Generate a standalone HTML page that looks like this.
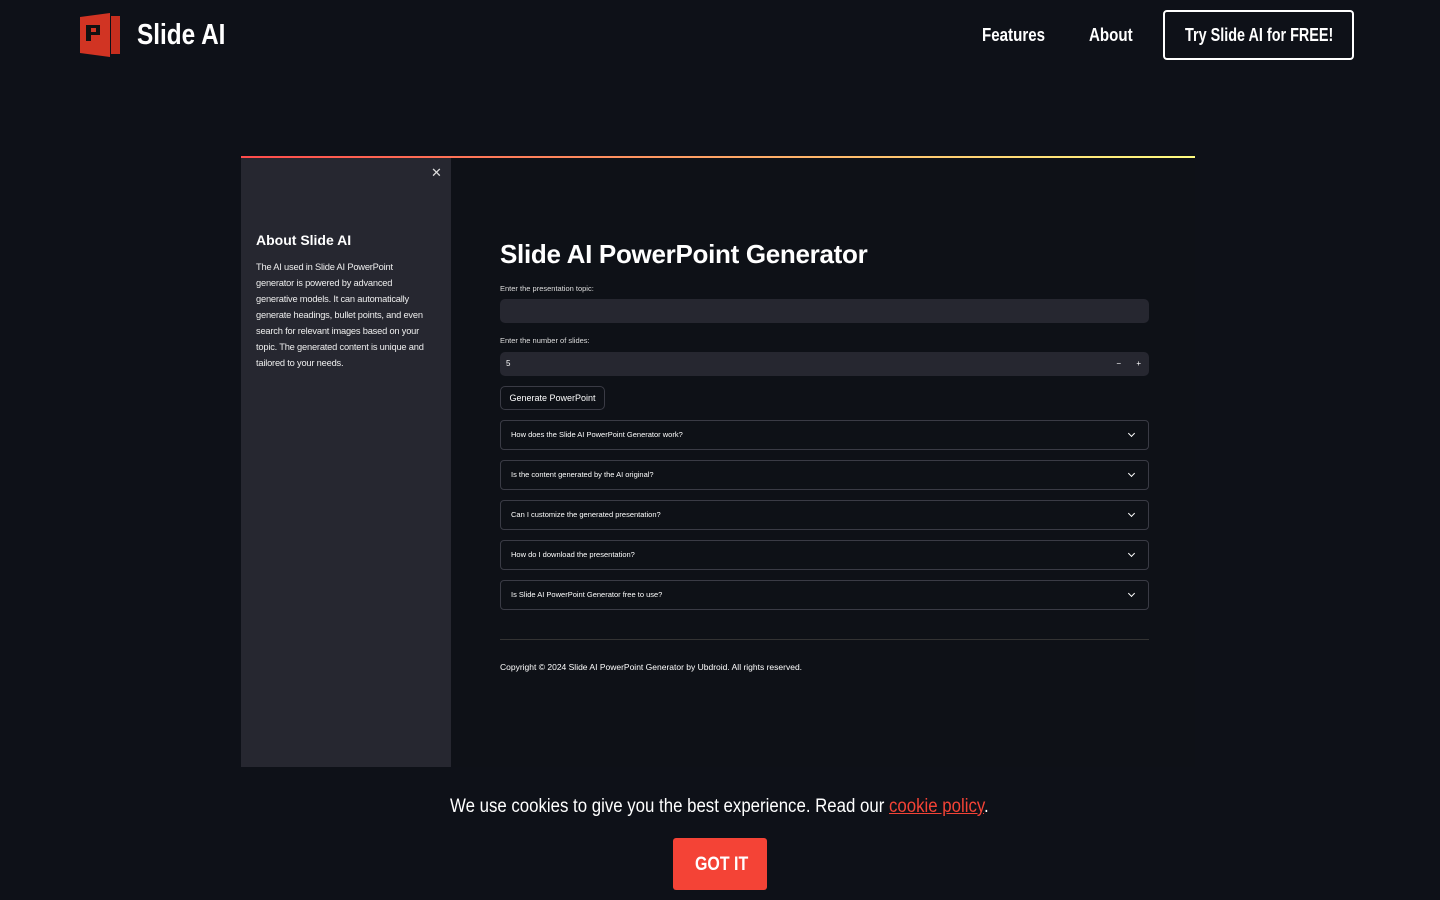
<!DOCTYPE html>
<html><head><meta charset="utf-8"><style>
*{margin:0;padding:0;box-sizing:border-box}
body{width:1440px;height:900px;background:#0e1118;color:#fff;font-family:"Liberation Sans",sans-serif;position:relative;overflow:hidden}
.nar{font-family:"Liberation Sans",sans-serif;font-weight:bold;white-space:nowrap;display:inline-block;transform:scaleX(0.84);transform-origin:left center}
.logo{position:absolute;left:80px;top:13px}
.brand{position:absolute;left:137px;top:19px;font-size:29px}
.nav{position:absolute;top:25px;font-size:18px}
.try{position:absolute;left:1163px;top:10px;width:191px;height:50px;border:2px solid #fff;border-radius:4px}
.try span{position:absolute;left:20px;top:13px;font-size:18px;transform:scaleX(0.8)}
.card{position:absolute;left:241px;top:156px;width:954px;height:611px;background:#0e1117;overflow:hidden}
.grad{position:absolute;left:0;top:0;width:100%;height:2px;background:linear-gradient(90deg,#ff4b4b,#fffd80)}
.side{position:absolute;left:0;top:2px;width:210px;height:609px;background:#262730}
.x{position:absolute;left:190px;top:7px;font-size:13px;color:#ddd}
.side h3{position:absolute;left:15px;top:74px;font-size:14px}
.side p{position:absolute;left:15px;top:101px;width:172px;font-size:9.3px;line-height:16px;color:#eee;letter-spacing:-0.2px}
.m{position:absolute;left:259px;width:649px}
h1{font-size:26px;font-weight:bold;letter-spacing:-0.3px}
.lbl{font-size:7.5px;color:#ddd}
.inp{height:24px;background:#262730;border-radius:5px}
.btn{position:absolute;left:259px;top:230px;width:105px;height:24px;border:1px solid #3a3b45;border-radius:5px;font-size:9px;line-height:22px;text-align:center}
.exp{height:30px;border:1px solid #3a3b45;border-radius:4px;font-size:7.5px;line-height:28px;padding-left:10px;position:absolute;left:259px;width:649px}
.exp:after{content:"";position:absolute;right:14px;top:10px;width:4px;height:4px;border-right:1.3px solid #fff;border-bottom:1.3px solid #fff;transform:rotate(45deg)}
</style></head><body>
<svg class="logo" width="41" height="44" viewBox="0 0 41 44"><path d="M0 4 L30 0 L30 44 L0 40Z" fill="#d13423"/><rect x="31" y="3" width="9" height="38" fill="#c62e1e"/><path d="M6 12h14v10h-9v6h-5zM11 15v4h5v-4z" fill="#111" fill-rule="evenodd"/></svg>
<div class="brand nar">Slide AI</div>
<div class="nav nar" style="left:982px">Features</div>
<div class="nav nar" style="left:1089px">About</div>
<div class="try"><span class="nar">Try Slide AI for FREE!</span></div>
<div class="card"><div class="grad"></div>
<div class="side"><div class="x">✕</div><h3>About Slide AI</h3><p>The AI used in Slide AI PowerPoint generator is powered by advanced generative models. It can automatically generate headings, bullet points, and even search for relevant images based on your topic. The generated content is unique and tailored to your needs.</p></div>
<h1 class="m" style="top:83px">Slide AI PowerPoint Generator</h1>
<div class="m lbl" style="top:128px">Enter the presentation topic:</div>
<div class="m inp" style="top:143px"></div>
<div class="m lbl" style="top:180px">Enter the number of slides:</div>
<div class="m inp" style="top:196px;font-size:8px;line-height:24px;padding-left:6px">5<span style="position:absolute;right:28px">−</span><span style="position:absolute;right:8px">+</span></div>
<div class="btn">Generate PowerPoint</div>
<div class="exp" style="top:264px">How does the Slide AI PowerPoint Generator work?</div>
<div class="exp" style="top:304px">Is the content generated by the AI original?</div>
<div class="exp" style="top:344px">Can I customize the generated presentation?</div>
<div class="exp" style="top:384px">How do I download the presentation?</div>
<div class="exp" style="top:424px">Is Slide AI PowerPoint Generator free to use?</div>
<div class="m" style="top:483px;height:1px;background:#333"></div>
<div class="m" style="top:506px;font-size:8.5px">Copyright © 2024 Slide AI PowerPoint Generator by Ubdroid. All rights reserved.</div>
</div>
<div style="position:absolute;left:450px;top:796px;font-size:19px;white-space:nowrap;transform:scaleX(0.885);transform-origin:left top">We use cookies to give you the best experience. Read our <span style="color:#f44336;text-decoration:underline">cookie policy</span>.</div>
<div style="position:absolute;left:673px;top:838px;width:94px;height:52px;background:#f44336;border-radius:3px"><span class="nar" style="position:absolute;left:22px;top:16px;font-size:19px">GOT IT</span></div>
</body></html>
